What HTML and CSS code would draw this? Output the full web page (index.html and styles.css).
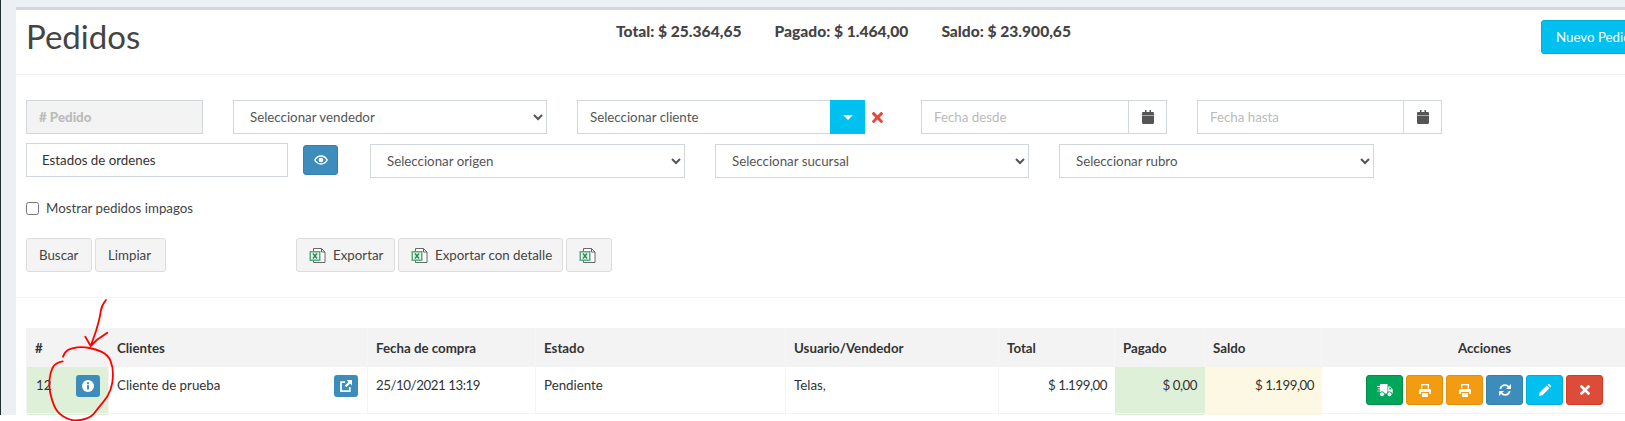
FILE: index.html
```html
<!DOCTYPE html>
<html lang="es">
<head>
<meta charset="utf-8">
<title>Pedidos</title>
<link rel="stylesheet" href="styles.css">
</head>
<body>
<div class="shell">
  <main class="box">
    <header class="box-header">
      <h1 class="title">Pedidos</h1>
      <div class="totals">
        <strong>Total: $ 25.364,65</strong>
        <strong>Pagado: $ 1.464,00</strong>
        <strong>Saldo: $ 23.900,65</strong>
      </div>
      <button class="btn-new" type="button">Nuevo Pedido</button>
    </header>

    <section class="filters">
      <div class="row row-one">
        <input class="control f-order" type="text" placeholder="# Pedido" disabled>
        <select class="control f-seller"><option>Seleccionar vendedor</option></select>
        <div class="combo">
          <span class="combo-text">Seleccionar cliente</span>
          <span class="combo-btn"><svg width="10" height="5" viewBox="0 0 10 5"><path fill="#fff" d="M0 0h10L5 5z"/></svg></span>
        </div>
        <svg class="clear-x" width="11" height="11" viewBox="0 0 352 352"><path fill="#dd4b39" d="M242.7 176l100-100c12.300-12.300 12.300-32.200 0-44.500L320.500 9.200c-12.300-12.300-32.200-12.300-44.500 0L176 109.300 75.900 9.200C63.700-3 43.800-3 31.500 9.200L9.200 31.500C-3 43.700-3 63.600 9.200 76l100.100 100L9.200 276c-12.300 12.300-12.300 32.200 0 44.500l22.300 22.300c12.300 12.300 32.200 12.300 44.400 0l100.100-100.100 100 100.100c12.300 12.300 32.300 12.300 44.500 0l22.300-22.300c12.300-12.300 12.300-32.200 0-44.500z"/></svg>
        <div class="date date-from">
          <input class="date-input" type="text" placeholder="Fecha desde">
          <span class="date-addon"><svg width="12" height="14" viewBox="0 0 12 14"><path fill="#555" d="M3 0h1.500v2h3V0H9v2h1.800c.7 0 1.200.5 1.200 1.200V5H0V3.200C0 2.500.5 2 1.200 2H3zM0 5.600h12v7.200c0 .7-.5 1.200-1.200 1.200H1.200C.5 14 0 13.500 0 12.800z"/></svg></span>
        </div>
        <div class="date date-to">
          <input class="date-input" type="text" placeholder="Fecha hasta">
          <span class="date-addon"><svg width="12" height="14" viewBox="0 0 12 14"><path fill="#555" d="M3 0h1.500v2h3V0H9v2h1.800c.7 0 1.200.5 1.200 1.200V5H0V3.200C0 2.500.5 2 1.200 2H3zM0 5.600h12v7.200c0 .7-.5 1.200-1.200 1.200H1.200C.5 14 0 13.500 0 12.800z"/></svg></span>
        </div>
      </div>

      <div class="row row-two">
        <div class="control f-states">Estados de ordenes</div>
        <button class="btn-eye" type="button"><svg width="14" height="10" viewBox="0 0 14 10"><path fill="none" stroke="#fff" stroke-width="1.400" d="M.8 5C2.300 2.400 4.500 1 7 1s4.700 1.400 6.200 4C11.700 7.600 9.500 9 7 9S2.300 7.600.8 5z"/><circle cx="7" cy="5" r="2.300" fill="#fff"/></svg></button>
        <select class="control f-origin"><option>Seleccionar origen</option></select>
        <select class="control f-branch"><option>Seleccionar sucursal</option></select>
        <select class="control f-rubro"><option>Seleccionar rubro</option></select>
      </div>

      <label class="check"><input class="check-box" type="checkbox"><span>Mostrar pedidos impagos</span></label>

      <div class="actions">
        <button class="btn b-search" type="button">Buscar</button>
        <button class="btn b-clear" type="button">Limpiar</button>
        <button class="btn b-export" type="button">
          <svg class="xls" width="17" height="17" viewBox="0 0 17 17"><path fill="#fff" stroke="#666" d="M4.500 1.500h8l3.500 3.500v10.500h-11.500z"/><path fill="none" stroke="#666" d="M12.500 1.500v3.500h3.500"/><rect x=".5" y="4" width="11" height="10" fill="#5aa97f"/><rect x="2" y="5.500" width="8" height="7" fill="#e4f4ea"/><path stroke="#2c8a55" stroke-width="1.500" d="M4 6.500l4 5M8 6.500l-4 5"/></svg>Exportar</button>
        <button class="btn b-detail" type="button">
          <svg class="xls" width="17" height="17" viewBox="0 0 17 17"><path fill="#fff" stroke="#666" d="M4.500 1.500h8l3.500 3.500v10.500h-11.500z"/><path fill="none" stroke="#666" d="M12.500 1.500v3.500h3.500"/><rect x=".5" y="4" width="11" height="10" fill="#5aa97f"/><rect x="2" y="5.500" width="8" height="7" fill="#e4f4ea"/><path stroke="#2c8a55" stroke-width="1.500" d="M4 6.500l4 5M8 6.500l-4 5"/></svg>Exportar con detalle</button>
        <button class="btn b-xls" type="button">
          <svg class="xls-only" width="17" height="17" viewBox="0 0 17 17"><path fill="#fff" stroke="#666" d="M4.500 1.500h8l3.500 3.500v10.500h-11.500z"/><path fill="none" stroke="#666" d="M12.500 1.500v3.500h3.500"/><rect x=".5" y="4" width="11" height="10" fill="#5aa97f"/><rect x="2" y="5.500" width="8" height="7" fill="#e4f4ea"/><path stroke="#2c8a55" stroke-width="1.500" d="M4 6.500l4 5M8 6.500l-4 5"/></svg></button>
      </div>
    </section>

    <section class="table-wrap">
      <table class="orders">
        <colgroup>
          <col class="c1"><col class="c2"><col class="c3"><col class="c4"><col class="c5"><col class="c6"><col class="c7"><col class="c8"><col class="c9">
        </colgroup>
        <thead>
          <tr>
            <th>#</th><th>Clientes</th><th>Fecha de compra</th><th>Estado</th><th>Usuario/Vendedor</th><th>Total</th><th>Pagado</th><th>Saldo</th><th class="center">Acciones</th>
          </tr>
        </thead>
        <tbody>
          <tr>
            <td class="paid">12
              <span class="mini"><svg width="12" height="12" viewBox="0 0 12 12"><circle cx="6" cy="6" r="6" fill="#fff"/><rect x="5" y="2.400" width="2" height="1.800" fill="#3c8dbc"/><rect x="5" y="5.200" width="2" height="4.200" fill="#3c8dbc"/></svg></span>
            </td>
            <td>Cliente de prueba
              <span class="mini mini-link"><svg width="12" height="12" viewBox="0 0 12 12"><path fill="none" stroke="#fff" stroke-width="1.700" d="M5 2.200H1v8.900h8.800V7"/><path fill="#fff" d="M6.600 0H12v5.400l-1.900-1.800-3.700 3.700-1.600-1.600 3.700-3.700z"/></svg></span>
            </td>
            <td class="num">25/10/2021 13:19</td>
            <td>Pendiente</td>
            <td>Telas,</td>
            <td class="right num">$ 1.199,00</td>
            <td class="right paid num">$ 0,00</td>
            <td class="right due num">$ 1.199,00</td>
            <td class="center">
              <div class="row-actions">
                <button class="act green" type="button"><svg width="16" height="13" viewBox="0 0 16 13"><path fill="#fff" d="M3 0h7.500v9.500H3zM11.200 2.500h2l2.500 3v4h-4.500z"/><path fill="#00a65a" d="M12.300 3.500h.8l1.500 2h-2.300z"/><path fill="#fff" d="M0 2h5v1.100H0zM.8 4.300h4.700v1.100H.8zM0 6.500h5v1.100H0z"/><path stroke="#00a65a" d="M0 1.400h3M0 3.700h3M0 6h3M0 8.200h3"/><circle cx="5" cy="10.300" r="2.500" fill="#fff" stroke="#00a65a"/><circle cx="12.500" cy="10.300" r="2.500" fill="#fff" stroke="#00a65a"/></svg></button>
                <button class="act orange" type="button"><svg width="12" height="13" viewBox="0 0 12 13"><path fill="#fff" d="M2 0h8v4.500H8.700V1.300H3.300v3.200H2zM1.300 5h9.400c.7 0 1.300.6 1.300 1.300V10h-2V8H2v2H0V6.300C0 5.600.6 5 1.300 5zM3 9h6v4H3z"/></svg></button>
                <button class="act orange" type="button"><svg width="12" height="13" viewBox="0 0 12 13"><path fill="#fff" d="M2 0h8v4.500H8.700V1.300H3.300v3.200H2zM1.300 5h9.400c.7 0 1.300.6 1.300 1.300V10h-2V8H2v2H0V6.300C0 5.600.6 5 1.300 5zM3 9h6v4H3z"/></svg></button>
                <button class="act blue" type="button"><svg width="12" height="12" viewBox="0 0 12 12"><path fill="none" stroke="#fff" stroke-width="1.800" d="M1.300 5C1.800 2.800 3.700 1.200 6 1.200c1.500 0 2.800.7 3.600 1.700"/><path fill="#fff" d="M12 0v5H7z"/><path fill="none" stroke="#fff" stroke-width="1.800" d="M10.700 7c-.5 2.200-2.400 3.800-4.700 3.800-1.500 0-2.800-.7-3.600-1.700"/><path fill="#fff" d="M0 12V7h5z"/></svg></button>
                <button class="act cyan" type="button"><svg width="12" height="12" viewBox="0 0 12 12"><path fill="#fff" d="M0 12l.7-3.400L7.800 1.500l2.700 2.700-7.100 7.100zM8.600.7l.4-.4c.4-.4 1-.4 1.400 0l1.300 1.300c.4.400.4 1 0 1.400l-.4.400z"/></svg></button>
                <button class="act red" type="button"><svg width="10" height="10" viewBox="0 0 352 352"><path fill="#fff" d="M242.700 176l100-100c12.300-12.300 12.300-32.200 0-44.500L320.500 9.200c-12.300-12.300-32.200-12.300-44.500 0L176 109.300 75.900 9.200C63.700-3 43.800-3 31.500 9.200L9.200 31.500C-3 43.700-3 63.600 9.200 76l100.100 100L9.200 276c-12.300 12.300-12.300 32.200 0 44.500l22.300 22.300c12.300 12.300 32.200 12.300 44.400 0l100.100-100.100 100 100.100c12.300 12.300 32.300 12.300 44.500 0l22.300-22.300c12.300-12.300 12.300-32.200 0-44.500z"/></svg></button>
              </div>
            </td>
          </tr>
          <tr class="next-row">
            <td class="paid"></td><td></td><td></td><td></td><td></td><td></td><td class="paid"></td><td class="due"></td><td></td>
          </tr>
        </tbody>
      </table>
    </section>
  </main>
</div>
<svg class="scribble" width="120" height="131" viewBox="0 0 120 131">
  <path fill="none" stroke="#f00" stroke-width="1.800" stroke-linecap="round" stroke-linejoin="round" d="M106 10Q101.700 15 100.800 20.800Q100 26.700 98.600 31.700Q97.300 36.700 96 41L90.700 56M85.300 46.700L90.700 56L96.700 50L107.300 42.700"/>
  <path fill="none" stroke="#f00" stroke-width="1.800" stroke-linecap="round" stroke-linejoin="round" d="M63 66.700Q65 61.700 68.300 59.800Q71.700 58 77.300 57.300Q83 56.700 89.800 58Q96.700 59.300 102.300 62.100Q108 65 110.500 70.800Q113 76.700 113 84.800Q113 93 110.500 99.800Q108 106.700 103 112.300Q98 118 95 122.300Q92 126.700 86 128.700Q80 130.700 74 130.300Q68 130 62.300 125.800Q56.700 121.700 54.200 115.800Q51.700 110 50.300 103.300Q49 96.700 49.500 89.800Q50 83 52.500 77.800Q55 72.700 62.700 71.300"/>
</svg>
</body>
</html>
```

FILE: styles.css
```css
* { box-sizing: border-box; }

html, body {
  margin: 0;
  height: 100%;
  background: #fff;
  overflow: hidden;
}

body {
  position: relative;
  font-family: "Lato", "Liberation Sans", sans-serif;
  font-size: 13.3px;
  line-height: 20px;
  color: #333;
}

.shell {
  width: 100%;
  height: 415px;
  padding: 7px 0 0 15px;
  overflow: hidden;
  background: #ecf0f5;
  border-left: 1px solid #222d32;
}

.box {
  width: 1700px;
  height: 500px;
  background: #fff;
  border-top: 3px solid #d2d6de;
}

.box-header {
  display: grid;
  grid-template-columns: 590px 925px 130px;
  height: 65px;
  padding-left: 10px;
  border-bottom: 1px solid #f4f4f4;
}

.title {
  margin: 6px 0 0;
  font-size: 33px;
  font-weight: 400;
  line-height: 40px;
  color: #444;
}

.totals {
  display: flex;
  gap: 33px;
  padding-top: 11px;
  font-size: 15.600px;
  font-weight: 900;
  color: #444;
}

.totals strong { font-weight: 900; }

.btn-new {
  height: 34px;
  margin-top: 10px;
  padding: 0 14px;
  text-align: left;
  white-space: nowrap;
  font: inherit;
  color: #fff;
  background: #00c0ef;
  border: 1px solid #00acd6;
  border-radius: 3px;
}

.filters {
  height: 223px;
  padding: 25px 0 0 10px;
  border-bottom: 1px solid #f4f4f4;
}

.row {
  display: flex;
  align-items: flex-start;
}

.control {
  height: 34px;
  padding: 6px 12px;
  font: inherit;
  color: #555;
  background: #fff;
  border: 1px solid #d2d6de;
  border-radius: 0;
}

.f-order {
  width: 177px;
  background: #f3f3f3;
  font-weight: 700;
}

.f-order::placeholder { color: #bbb; opacity: 1; font-weight: 900; }

.f-seller { width: 314px; margin-left: 30px; }

.combo {
  display: flex;
  width: 288px;
  height: 34px;
  margin-left: 30px;
  border: 1px solid #d2d6de;
  color: #555;
}

.combo-text { flex: 1; padding: 6px 12px; }

.combo-btn {
  display: flex;
  align-items: center;
  justify-content: center;
  width: 35px;
  height: 34px;
  margin: -1px -1px 0 0;
  background: #00c0ef;
}

.clear-x { margin: 12px 0 0 7px; flex: none; }

.date {
  display: flex;
  height: 34px;
  border: 1px solid #d2d6de;
}

.date-from { width: 246px; margin-left: 38px; }
.date-to { width: 245px; margin-left: 30px; }

.date-input {
  flex: 1;
  min-width: 0;
  padding: 6px 12px;
  font: inherit;
  border: 0;
  background: #fff;
}

.date-input::placeholder { color: #bbb; opacity: 1; }

.date-addon {
  display: flex;
  align-items: center;
  justify-content: center;
  flex: none;
  width: 38px;
  border-left: 1px solid #d2d6de;
}

.row-two { padding-top: 9px; }

.f-states { width: 262px; padding-left: 15px; color: #333; }

.btn-eye {
  display: flex;
  align-items: center;
  justify-content: center;
  width: 35px;
  height: 30px;
  margin: 2px 0 0 15px;
  padding: 0;
  background: #3c8dbc;
  border: 1px solid #367fa9;
  border-radius: 3px;
}

.f-origin { width: 315px; margin: 1px 0 0 32px; }
.f-branch { width: 314px; margin: 1px 0 0 30px; }
.f-rubro { width: 315px; margin: 1px 0 0 30px; }

.check {
  display: flex;
  align-items: center;
  gap: 7px;
  height: 20px;
  margin-top: 20px;
  color: #444;
}

.check-box { width: 13px; height: 13px; margin: 0; }

.actions {
  display: flex;
  padding: 20px 0 0;
}

.btn {
  display: flex;
  align-items: center;
  height: 34px;
  padding: 0 0 0 12px;
  white-space: nowrap;
  font: inherit;
  color: #444;
  background: #f4f4f4;
  border: 1px solid #ddd;
  border-radius: 3px;
}

.b-search { width: 66px; }
.b-clear { width: 71px; margin-left: 3px; }
.b-export { width: 99px; margin-left: 130px; }
.b-detail { width: 165px; margin-left: 3px; }
.b-xls { width: 46px; margin-left: 3px; }

.xls { margin-right: 7px; flex: none; }
.xls-only { flex: none; }

.table-wrap { padding: 30px 0 0 10px; }

.orders {
  table-layout: fixed;
  width: 1622px;
  border-collapse: separate;
  border-spacing: 0;
}

.c1 { width: 83px; }
.c2 { width: 259px; }
.c3 { width: 168px; }
.c4 { width: 250px; }
.c5 { width: 213px; }
.c6 { width: 116px; }
.c7 { width: 90px; }
.c8 { width: 117px; }
.c9 { width: 326px; }

.orders th {
  height: 39px;
  padding: 8px;
  text-align: left;
  font-weight: 700;
  color: #333;
  background: #f3f3f3;
  border-right: 1px solid #f6f6f6;
}

.orders th:first-child,
.orders td:first-child { padding-left: 9px; }

.orders td {
  height: 46px;
  padding: 8px;
  vertical-align: top;
  background-clip: padding-box;
  border-right: 1px solid #f4f4f4;
  border-bottom: 1px solid #f4f4f4;
}

.orders td:first-child { border-left: 1px solid #f4f4f4; }

.orders th.center, .orders td.center { text-align: center; }
.orders td.right { text-align: right; }

.orders td.num { letter-spacing: -.45px; }

.orders td.paid { background-color: #dff0d8; }
.orders td.due { background-color: #fcf8e3; }
.orders td.right.paid, .orders td.right.due, .orders td:nth-child(6) { border-right: 0; }

.mini {
  float: right;
  display: flex;
  align-items: center;
  justify-content: center;
  width: 24px;
  height: 22px;
  background: #3c8dbc;
  border-radius: 3px;
}

.mini-link { margin-right: 1px; }

.row-actions {
  display: flex;
  justify-content: center;
  gap: 3px;
}

.act {
  display: flex;
  align-items: center;
  justify-content: center;
  width: 37px;
  height: 30px;
  padding: 0;
  border: 1px solid transparent;
  border-radius: 3px;
}

.green { background: #00a65a; border-color: #008d4c; }
.orange { background: #f39c12; border-color: #e08e0b; }
.blue { background: #3c8dbc; border-color: #367fa9; }
.cyan { background: #00c0ef; border-color: #00acd6; }
.red { background: #dd4b39; border-color: #d73925; }

.next-row td { height: 40px; }

.scribble {
  position: absolute;
  left: 0;
  top: 290px;
  pointer-events: none;
}
```
